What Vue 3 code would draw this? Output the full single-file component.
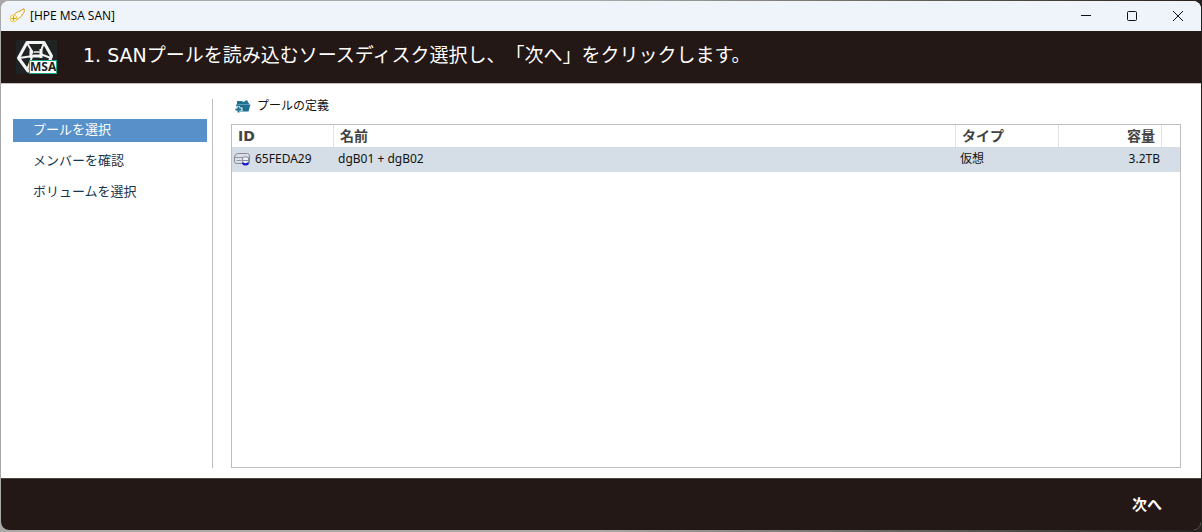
<script setup>
import { ref } from 'vue'

const steps = ['プールを選択', 'メンバーを確認', 'ボリュームを選択']
const current = ref(0)
const pools = [{ id: '65FEDA29', name: 'dgB01 + dgB02', type: '仮想', size: '3.2TB' }]
const selected = ref(0)
</script>

<template>
  <div class="desktop">
    <div class="window">
      <div class="titlebar">
        <svg class="wing" width="16" height="16" viewBox="0 0 16 16" fill="none" stroke="#c99a18" stroke-width="1" stroke-linecap="round">
          <path d="M5.500 6.500C6 4.500 9 4 11 3C12.500 2.300 13.800 1 15 0.800C15.800 3 15 5 13.500 6C13 8 12 9 10.800 9.500C10 10.500 9 11 8 11" fill="#fffbe8" />
          <circle cx="4.500" cy="10.500" r="3.500" fill="#fff8d2" stroke="#e8c95c" />
          <path d="M4.500 8.500V12.500M2.500 10.500H6.500" stroke="#d6a500" />
        </svg>
        <span class="caption">[HPE MSA SAN]</span>
        <div class="controls">
          <button aria-label="最小化"><svg width="12" height="12" viewBox="0 0 12 12"><path d="M1 5.500H11" /></svg></button>
          <button aria-label="最大化"><svg width="12" height="12" viewBox="0 0 12 12"><rect x="1.500" y="1.500" width="9" height="9" rx="1" /></svg></button>
          <button aria-label="閉じる"><svg width="12" height="12" viewBox="0 0 12 12"><path d="M1 1L11 11M11 1L1 11" /></svg></button>
        </div>
      </div>

      <header class="banner">
        <div class="logo">
          <svg width="41" height="34" viewBox="0 0 41 34">
            <rect width="41" height="34" fill="#202323" />
            <g fill="none" stroke="#f4f4f4" stroke-linejoin="round">
              <path d="M11 2.500H28L35.500 16L30 31H12L2.500 18Z" stroke-width="3" />
              <path d="M11 3L17 13M28 3L24 13M3 18L17 16M16 17L11 30M24 14L35 18" stroke-width="2" />
              <path d="M17 16H25M15 10V18M25 9V18" stroke-width="3" />
              <path d="M18 12H23" stroke="#bfc1c1" stroke-width="2" />
            </g>
          </svg>
          <span class="tag">MSA</span>
        </div>
        <h1>1. SANプールを読み込むソースディスク選択し、「次へ」をクリックします。</h1>
      </header>

      <main class="content">
        <nav class="steps">
          <a v-for="(step, i) in steps" :key="step" href="#" :class="{ active: i === current }" @click.prevent="current = i">{{ step }}</a>
        </nav>
        <section class="panel">
          <button class="define">
            <svg width="16" height="14" viewBox="0 0 16 14">
              <path d="M2 5V2H7L8.500 3L12 1L13.500 4H14V6H2Z" fill="#216f91" />
              <path d="M1 5.500H15.500L13.500 12.500H3Z" fill="#216f91" />
              <path d="M2.500 5.500H14" stroke="#8fb9ca" stroke-width="0.600" />
              <path d="M2 7H5V8.500H7.500V12H5V14H2V12H0V8.500H2Z" fill="#fff" />
              <path d="M3.500 7.500V13.500M0.500 10.500H6.500" stroke="#216f91" stroke-width="2" />
            </svg>
            プールの定義
          </button>
          <div class="grid">
            <table>
              <colgroup><col class="c-id" /><col /><col class="c-type" /><col class="c-size" /><col class="c-end" /></colgroup>
              <thead>
                <tr><th>ID</th><th>名前</th><th>タイプ</th><th class="num">容量</th><th></th></tr>
              </thead>
              <tbody>
                <tr v-for="(pool, i) in pools" :key="pool.id" :class="{ selected: i === selected }" @click="selected = i">
                  <td>
                    <div class="id">
                      <svg width="16" height="14" viewBox="0 0 16 14">
                        <path d="M3.500 1.500H13.500Q15.500 2 15.500 4V10.500Q15.500 11.500 14 11.500H2.500Q0.500 11.500 0.500 9.500V5Q1 2 3.500 1.500Z" fill="#dcdee4" stroke="#858a96" />
                        <path d="M1 5.500H9M2.500 8.500H7.500" stroke="#9298a5" />
                        <path d="M8.500 5.500Q11.500 4 14.500 5.500V11.500H8.500Z" fill="#eef0f5" stroke="#868c9d" />
                        <path d="M8.500 8.500H14.500" stroke="#858b9a" />
                        <path d="M8.500 11Q11.500 14 14.500 11" fill="none" stroke="#1515dd" stroke-width="2" />
                      </svg>{{ pool.id }}
                    </div>
                  </td>
                  <td>{{ pool.name }}</td><td>{{ pool.type }}</td><td class="num">{{ pool.size }}</td><td></td>
                </tr>
              </tbody>
            </table>
          </div>
        </section>
      </main>

      <footer class="footer"><button>次へ</button></footer>
    </div>
  </div>
</template>

<style>
html, body, #app { height: 100%; }
body { margin: 0; }
</style>

<style scoped>
* { box-sizing: border-box; }
button { border: 0; background: none; padding: 0; font: inherit; color: inherit; cursor: pointer; }
.desktop {
  height: 100%;
  padding: 1px 1px 2px;
  background: linear-gradient(90deg, #a8a8a8 0 50%, #24211f);
  font-family: "Noto Sans", "Noto Sans CJK JP", sans-serif;
}
.window {
  height: 100%;
  display: flex;
  flex-direction: column;
  border-radius: 8px;
  overflow: hidden;
  background: #fff;
}
.titlebar { height: 30px; display: flex; align-items: center; padding-left: 8px; background: #eff3fa; color: #000; }
.caption { margin-left: 5px; font: 12px/18px "Open Sans", sans-serif; }
.controls { margin-left: auto; display: flex; }
.controls button { width: 46px; height: 30px; display: flex; align-items: center; justify-content: center; }
.controls svg { fill: none; stroke: #111; stroke-width: 1; }
.banner {
  height: 53px;
  display: flex;
  align-items: center;
  padding-left: 15px;
  gap: 26px;
  background: #231815;
  border-bottom: 1px solid #c4c0be;
  color: #fff;
}
.logo { position: relative; width: 41px; height: 34px; }
.logo svg { display: block; }
.tag {
  position: absolute;
  right: 0;
  bottom: 0;
  width: 28px;
  height: 14px;
  border: 1px solid #18a888;
  background: #fff;
  color: #222;
  font: bold 12px/12px "Noto Sans", sans-serif;
  text-align: center;
}
h1 {
  margin: 0;
  padding-bottom: 4px;
  font: 400 19px/28px "DejaVu Sans", "Noto Sans CJK JP", sans-serif;
  text-spacing-trim: space-all;
  white-space: nowrap;
}
.content { flex: 1; min-height: 0; display: flex; padding: 15px 20px 10px 12px; gap: 18px; }
.steps {
  width: 200px;
  padding: 20px 5px 0 0;
  display: flex;
  flex-direction: column;
  gap: 8px;
  border-right: 1px solid #bdbdbd;
}
.steps a { height: 23px; padding-left: 20px; font-size: 13px; line-height: 20px; color: #16354f; text-decoration: none; }
.steps a.active { background: #5891c9; color: #fff; }
.panel { flex: 1; min-width: 0; display: flex; flex-direction: column; }
.define { align-self: flex-start; height: 25px; padding: 0 0 11px 4px; display: flex; align-items: center; gap: 6px; font-size: 12px; line-height: 14px; color: #111; }
.grid { flex: 1; border: 1px solid #bdbdbd; background: #fff; }
table { width: 100%; table-layout: fixed; border-collapse: separate; border-spacing: 0; color: #111; }
.c-id { width: 102px; }
.c-type { width: 103px; }
.c-size { width: 103px; }
.c-end { width: 18px; }
th, td { padding: 0; text-align: left; white-space: nowrap; }
th { height: 22px; padding: 0 6px; border-right: 1px solid #e3e3e3; font-size: 14px; line-height: 20px; font-weight: 700; color: #444; }
th:first-child { font-family: "DejaVu Sans", sans-serif; }
th:last-child { border-right: 0; padding: 0; }
td { height: 25px; padding: 0 4px 2px; font-size: 12px; line-height: 20px; }
td:first-child { padding-left: 2px; }
th.num, td.num { text-align: right; }
td.num { padding-right: 2px; }
.selected td { background: #d5dee6; }
.id { display: flex; align-items: center; gap: 5px; }
.footer { height: 52px; display: flex; align-items: center; justify-content: flex-end; padding: 0 39px 2px 0; background: #231815; border-top: 1px solid #4a4543; color: #fff; font-size: 15px; line-height: 24px; font-weight: 700; }
</style>
